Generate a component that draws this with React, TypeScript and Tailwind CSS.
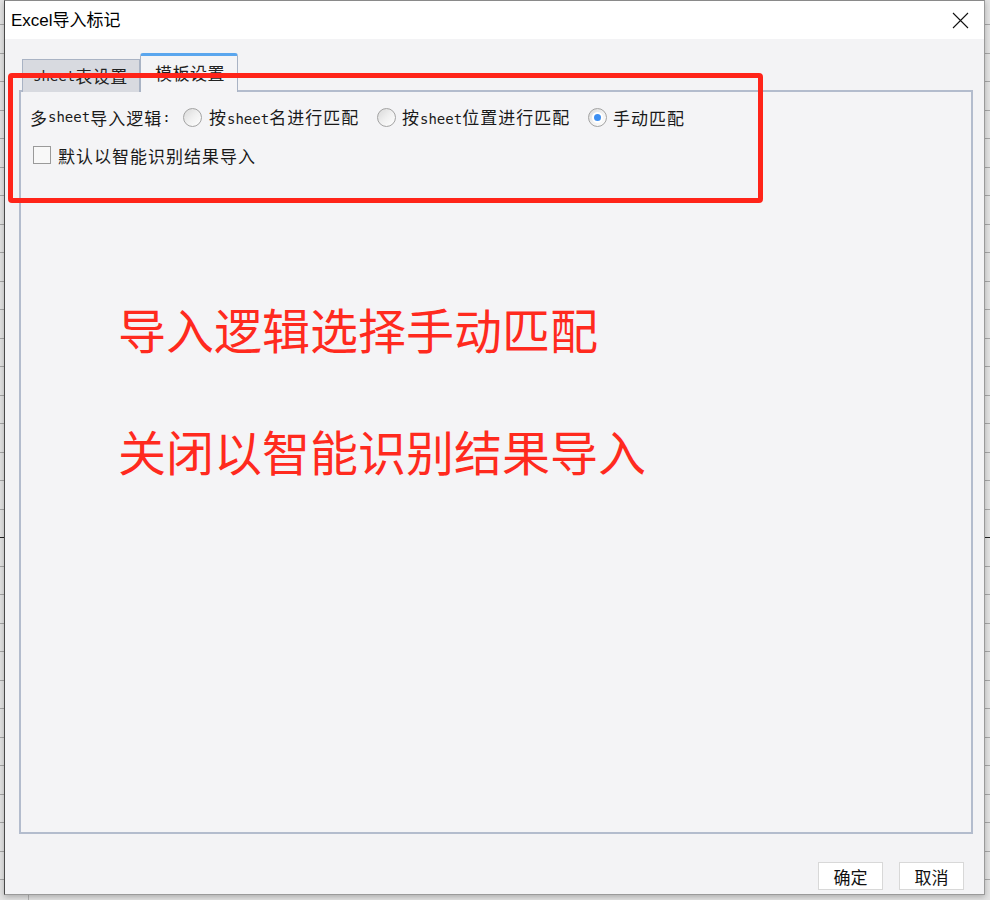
import React from "react";

const CJK = "font-['Noto_Sans_CJK_SC','Noto_Sans',sans-serif]";

function Sheet({ children }: { children: React.ReactNode }) {
  return <span className="font-['DejaVu_Sans_Mono',monospace] text-[14px] tracking-normal">{children}</span>;
}

function Radio({ checked }: { checked?: boolean }) {
  return (
    <span className="w-[19px] h-[19px] rounded-full border border-[#a3a3a3] bg-gradient-to-br from-[#d9d9d9] via-[#f0f0f0] to-white flex items-center justify-center shrink-0">
      {checked && (
        <span className="w-[11px] h-[11px] rounded-full bg-white flex items-center justify-center">
          <span className="w-[7px] h-[7px] rounded-full bg-[#3d8ff2]" />
        </span>
      )}
    </span>
  );
}

export default function App() {
  const rows = Array.from({ length: 31 }, (_, i) => i);
  return (
    <div className={`relative w-[990px] h-[900px] overflow-hidden bg-[#e4e4e4] ${CJK}`}>
      {/* spreadsheet background */}
      <div className="flex w-full h-full">
        <div className="w-[29px] border-r border-[#b5b5b5] flex flex-col">
          <div className="h-[25px] border-b border-[#a8a8a8] shrink-0" />
          {rows.map((i) => (
            <div
              key={i}
              className={`h-[28.5px] shrink-0 border-b ${i === 17 ? "border-[#222]" : "border-[#a8a8a8]"}`}
            />
          ))}
        </div>
        <div className="flex-1 flex flex-col">
          <div className="h-[25px] border-b border-[#a8a8a8] shrink-0" />
          {rows.map((i) => (
            <div
              key={i}
              className={`h-[28.5px] shrink-0 border-b ${i === 17 ? "border-[#222]" : "border-[#a8a8a8]"}`}
            />
          ))}
        </div>
      </div>

      {/* dialog */}
      <div className="absolute left-[4px] top-0 w-[981px] h-[895px] flex flex-col border-l border-l-[#4a4a4a] border-t border-t-[#8a8a8a] border-r border-r-[#9a9a9a] border-b border-b-[#9a9a9a] shadow-[0_2px_6px_rgba(0,0,0,0.25)]">
        {/* title bar */}
        <div className="h-[38px] bg-white flex items-center justify-between pl-[6px] pr-[15px] shrink-0">
          <span className="text-[17px] text-black font-['Liberation_Sans','Noto_Sans_CJK_SC',sans-serif] leading-none">
            Excel导入标记
          </span>
          <svg width="17" height="17" viewBox="0 0 17 17" className="mt-[1px]">
            <path d="M1 1 L16 16 M16 1 L1 16" stroke="#111" strokeWidth="1.1" fill="none" />
          </svg>
        </div>

        {/* body */}
        <div className="flex-1 bg-[#f3f3f5] flex flex-col pl-[14px] pr-[11px] pt-[14px]">
          {/* tabs */}
          <div className="flex items-end ml-[3px] h-[39px] -mb-[2px] relative z-10">
            <div className="w-[118px] h-[33px] bg-[#d8dae0] border border-[#a9b3c4] border-b-0 flex items-center pl-[10px] text-[17px] text-[#222] tracking-[0.5px]">
              <Sheet>sheet</Sheet>表设置
            </div>
            <div className="w-[98px] h-[39px] bg-[#f4f4f6] border border-[#a9b3c4] border-t-[3px] border-t-[#5aa6ee] rounded-t-[3px] border-b-0 flex items-start pt-[4px] pl-[14px] text-[17px] text-[#222] tracking-[0.5px]">
              模板设置
            </div>
          </div>

          {/* panel */}
          <div className="h-[744px] border-2 border-[#b3bccd] bg-[#f4f4f6] flex flex-col pl-[9px] pt-[13px]">
            <div className="flex items-center h-[24px] text-[17px] text-[#1a1a1a] tracking-[1px] leading-none">
              <span className="w-[153px] flex items-center">
                多<Sheet>sheet</Sheet>导入逻辑<Sheet>:</Sheet>
              </span>
              <span className="w-[194px] flex items-center">
                <Radio />
                <span className="ml-[7px]">
                  按<Sheet>sheet</Sheet>名进行匹配
                </span>
              </span>
              <span className="w-[211px] flex items-center">
                <Radio />
                <span className="ml-[6px]">
                  按<Sheet>sheet</Sheet>位置进行匹配
                </span>
              </span>
              <span className="flex items-center">
                <Radio checked />
                <span className="ml-[6px]">手动匹配</span>
              </span>
            </div>

            <div className="flex items-center h-[24px] mt-[14px] ml-[3px] text-[17px] text-[#1a1a1a] tracking-[1px] leading-none">
              <span className="w-[18px] h-[18px] border border-[#9a9a9a] bg-[#f8f8f8] shrink-0" />
              <span className="ml-[7px]">默认以智能识别结果导入</span>
            </div>

            <div className="ml-[88px] mt-[137px] flex flex-col gap-[74px] text-[48px] leading-none text-[#ff2a1e]">
              <div>导入逻辑选择手动匹配</div>
              <div>关闭以智能识别结果导入</div>
            </div>
          </div>

          {/* buttons */}
          <div className="flex justify-end gap-[16px] mt-[28px] pr-[9px]">
            <button className="w-[65px] h-[28px] bg-white border border-[#d8d8d8] text-[17px] text-[#111] leading-none">
              确定
            </button>
            <button className="w-[65px] h-[28px] bg-white border border-[#d8d8d8] text-[17px] text-[#111] leading-none">
              取消
            </button>
          </div>
        </div>
      </div>

      {/* red annotation rectangle */}
      <div className="absolute left-[8px] top-[73px] w-[755px] h-[130px] border-[5px] border-[#ff2419] rounded-[4px] pointer-events-none z-20" />
    </div>
  );
}
